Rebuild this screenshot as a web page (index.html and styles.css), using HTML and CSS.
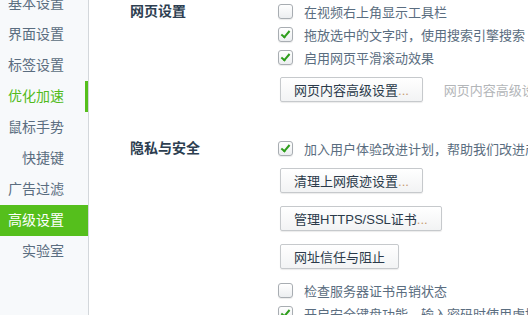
FILE: index.html
```html
<!DOCTYPE html>
<html lang="zh-CN">
<head>
  <meta charset="UTF-8" />
  <title>高级设置</title>
  <link rel="stylesheet" href="styles.css">
</head>
<body>
  <div class="page">
    <nav class="sidebar">
      <ul class="menu">
        <li class="menu-item">基本设置</li>
        <li class="menu-item">界面设置</li>
        <li class="menu-item">标签设置</li>
        <li class="menu-item hover">优化加速</li>
        <li class="menu-item">鼠标手势</li>
        <li class="menu-item sub">快捷键</li>
        <li class="menu-item">广告过滤</li>
        <li class="menu-item active">高级设置</li>
        <li class="menu-item sub">实验室</li>
      </ul>
    </nav>

    <main class="content">
      <section class="group">
        <h2 class="group-title">网页设置</h2>
        <div class="options">
          <label class="option"><span class="check"></span>在视频右上角显示工具栏</label>
          <label class="option"><span class="check on"></span>拖放选中的文字时，使用搜索引擎搜索</label>
          <label class="option"><span class="check on"></span>启用网页平滑滚动效果</label>
          <div class="btn-row first">
            <button class="btn">网页内容高级设置<span class="dots">...</span></button>
            <span class="hint">网页内容高级设置</span>
          </div>
        </div>
      </section>

      <section class="group privacy">
        <h2 class="group-title">隐私与安全</h2>
        <div class="options">
          <label class="option"><span class="check on"></span>加入用户体验改进计划，帮助我们改进产品</label>
          <div class="btn-row first">
            <button class="btn">清理上网痕迹设置<span class="dots">...</span></button>
          </div>
          <div class="btn-row">
            <button class="btn">管理HTTPS/SSL证书<span class="dots">...</span></button>
          </div>
          <div class="btn-row">
            <button class="btn">网址信任与阻止</button>
          </div>
          <label class="option after-btn"><span class="check"></span>检查服务器证书吊销状态</label>
          <label class="option"><span class="check on"></span>开启安全键盘功能，输入密码时使用虚拟键盘</label>
        </div>
      </section>
    </main>
  </div>
</body>
</html>
```

FILE: styles.css
```css
html, body {
  margin: 0;
  height: 100%;
  overflow: hidden;
}

body {
  font-family: "Liberation Sans", "Noto Sans CJK SC", sans-serif;
  background: #fff;
  color: #5a6d80;
}

.page {
  display: flex;
  height: 100%;
}

/* left menu */
.sidebar {
  width: 88px;
  flex-shrink: 0;
  background: #f7f9fb;
  border-right: 1px solid #d3d7db;
}

.menu {
  list-style: none;
  margin: -12px 0 0;
  padding: 0;
}

.menu-item {
  position: relative;
  height: 31px;
  line-height: 31px;
  padding-left: 8px;
  font-size: 14px;
  color: #5a6d80;
  white-space: nowrap;
}

.menu-item.sub {
  padding-left: 22px;
}

.menu-item.hover {
  color: #52bb1c;
}

.menu-item.hover::after {
  content: "";
  position: absolute;
  right: 0;
  top: 0;
  width: 3px;
  height: 31px;
  background: #55bf1c;
}

.menu-item.active {
  background: #55bf1c;
  color: #fff;
}

/* settings */
.content {
  flex: 1;
  min-width: 0;
  white-space: nowrap;
}

.group {
  display: grid;
  grid-template-columns: 148px 1fr;
  padding-left: 41px;
}

.group.privacy {
  margin-top: 35px;
}

.group-title {
  margin: 0;
  font-size: 14px;
  font-weight: bold;
  line-height: 23px;
  color: #2d3e50;
}

.options {
  display: flex;
  flex-direction: column;
  align-items: flex-start;
}

.option {
  display: flex;
  align-items: center;
  height: 23px;
  font-size: 13px;
  color: #5a6d80;
}

.option.after-btn {
  margin-top: 10px;
}

.check {
  width: 13px;
  height: 13px;
  margin-right: 11px;
  border: 1px solid #a8adb2;
  border-radius: 3px;
  background: linear-gradient(#fff, #eceef0);
  box-shadow: 0 1px 1px rgba(0, 0, 0, 0.08);
  flex-shrink: 0;
  position: relative;
}

.check.on::after {
  content: "";
  position: absolute;
  left: 4px;
  top: 1px;
  width: 3px;
  height: 7px;
  border: solid #2e9e1c;
  border-width: 0 2px 2px 0;
  transform: rotate(40deg);
}

.btn-row {
  display: flex;
  align-items: center;
  margin-top: 13px;
  margin-left: 2px;
}

.btn-row.first {
  margin-top: 8px;
}

.btn {
  height: 25px;
  padding: 0 13px;
  font-family: inherit;
  font-size: 13px;
  color: #2b3a4a;
  border: 1px solid #c6c9cc;
  border-radius: 2px;
  background: linear-gradient(#fff, #f2f3f4);
  box-shadow: 0 1px 1px rgba(0, 0, 0, 0.08);
}

.dots {
  color: #c79a70;
}

.hint {
  margin-left: 21px;
  font-size: 13px;
  color: #b3b6b9;
}
```
